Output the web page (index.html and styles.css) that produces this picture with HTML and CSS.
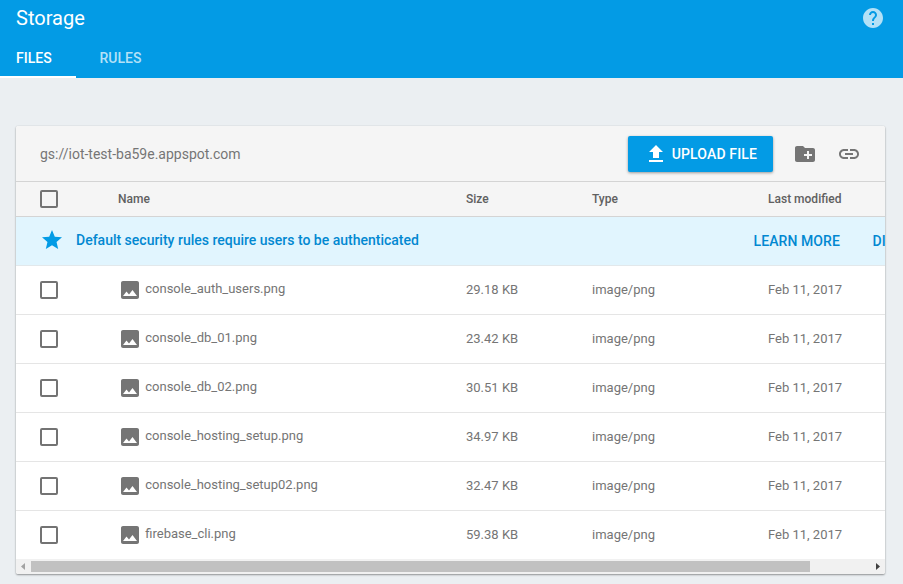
FILE: index.html
```html
<!DOCTYPE html>
<html lang="en">
<head>
<meta charset="utf-8">
<title>Storage</title>
<link rel="stylesheet" href="styles.css">
</head>
<body>
<svg width="0" height="0" class="defs">
  <symbol id="image" viewBox="0 0 24 24"><path d="M21 19V5c0-1.100-.9-2-2-2H5c-1.100 0-2 .9-2 2v14c0 1.100.9 2 2 2h14c1.100 0 2-.9 2-2zM8.500 13.500l2.500 3.010L14.500 12l4.500 6H5l3.500-4.500z"/></symbol>
</svg>
<header class="appbar">
  <div class="title-row">
    <h1>Storage</h1>
    <svg class="icon help" viewBox="0 0 24 24"><path d="M12 2C6.480 2 2 6.480 2 12s4.480 10 10 10 10-4.480 10-10S17.520 2 12 2zm1 17h-2v-2h2v2zm2.070-7.750l-.9.920C13.450 12.900 13 13.500 13 15h-2v-.5c0-1.100.45-2.100 1.170-2.830l1.240-1.260c.37-.36.59-.86.59-1.410 0-1.100-.9-2-2-2s-2 .9-2 2H8c0-2.210 1.790-4 4-4s4 1.790 4 4c0 .88-.36 1.680-.93 2.250z"/></svg>
  </div>
  <nav class="tabs">
    <a class="tab active">FILES</a>
    <a class="tab">RULES</a>
  </nav>
</header>
<main class="card">
  <div class="toolbar">
    <span class="bucket">gs://iot-test-ba59e.appspot.com</span>
    <button class="upload"><svg class="icon" viewBox="0 0 24 24"><path d="M9 16h6v-6h4l-7-7-7 7h4zm-4 2h14v2H5z"/></svg><span>UPLOAD FILE</span></button>
    <svg class="icon folder" viewBox="0 0 24 24"><path d="M20 6h-8l-2-2H4c-1.110 0-1.990.89-1.990 2L2 18c0 1.110.89 2 2 2h16c1.110 0 2-.89 2-2V8c0-1.110-.89-2-2-2zm-1 8h-3v3h-2v-3h-3v-2h3V9h2v3h3v2z"/></svg>
    <svg class="icon link" viewBox="0 0 24 24"><path d="M3.900 12c0-1.710 1.390-3.100 3.100-3.100h4V7H7c-2.760 0-5 2.240-5 5s2.240 5 5 5h4v-1.900H7c-1.710 0-3.100-1.390-3.100-3.100zM8 13h8v-2H8v2zm9-6h-4v1.900h4c1.710 0 3.100 1.390 3.100 3.100s-1.390 3.100-3.100 3.100h-4V17h4c2.760 0 5-2.240 5-5s-2.240-5-5-5z"/></svg>
  </div>
  <div class="row head"><span class="check"></span><span>Name</span><span>Size</span><span>Type</span><span>Last modified</span></div>
  <div class="banner">
    <svg class="icon" viewBox="0 0 24 24"><path d="M12 17.270L18.180 21l-1.640-7.030L22 9.240l-7.190-.61L12 2 9.190 8.630 2 9.240l5.460 4.730L5.820 21z"/></svg>
    <span class="message">Default security rules require users to be authenticated</span>
    <a class="action">LEARN MORE</a>
    <a class="action">DISMISS</a>
  </div>
  <div class="row"><span class="check"></span><span class="name"><svg class="icon"><use href="#image"/></svg><span>console_auth_users.png</span></span><span>29.18 KB</span><span>image/png</span><span>Feb 11, 2017</span></div>
  <div class="row"><span class="check"></span><span class="name"><svg class="icon"><use href="#image"/></svg><span>console_db_01.png</span></span><span>23.42 KB</span><span>image/png</span><span>Feb 11, 2017</span></div>
  <div class="row"><span class="check"></span><span class="name"><svg class="icon"><use href="#image"/></svg><span>console_db_02.png</span></span><span>30.51 KB</span><span>image/png</span><span>Feb 11, 2017</span></div>
  <div class="row"><span class="check"></span><span class="name"><svg class="icon"><use href="#image"/></svg><span>console_hosting_setup.png</span></span><span>34.97 KB</span><span>image/png</span><span>Feb 11, 2017</span></div>
  <div class="row"><span class="check"></span><span class="name"><svg class="icon"><use href="#image"/></svg><span>console_hosting_setup02.png</span></span><span>32.47 KB</span><span>image/png</span><span>Feb 11, 2017</span></div>
  <div class="row last"><span class="check"></span><span class="name"><svg class="icon"><use href="#image"/></svg><span>firebase_cli.png</span></span><span>59.38 KB</span><span>image/png</span><span>Feb 11, 2017</span></div>
  <div class="scrollbar">
    <svg class="arrow off" viewBox="0 0 15 15"><path d="M9 4v7L5 7.500z"/></svg>
    <div class="track"><div class="thumb"></div></div>
    <svg class="arrow" viewBox="0 0 15 15"><path d="M6 4v7l4-3.500z"/></svg>
  </div>
</main>
</body>
</html>
```
FILE: styles.css
```css
* { box-sizing: border-box; }
body {
  margin: 0;
  height: 584px;
  overflow: hidden;
  background: #ebeff2;
  color: #757575;
  font: 14px/20px Roboto, sans-serif;
}
.defs { display: block; }
.icon { width: 24px; height: 24px; fill: currentColor; flex: none; }
.appbar { height: 78px; background: #039be5; color: #fff; }
.title-row {
  display: flex;
  justify-content: space-between;
  align-items: center;
  height: 36px;
  padding: 0 18px 0 16px;
}
h1 { margin: 0; font-size: 20px; font-weight: 400; line-height: 24px; }
.help { color: #b3e1f7; }
.tabs { display: flex; height: 42px; }
.tab {
  width: 76px;
  padding: 12px 0 0 16px;
  font-weight: 500;
  color: #b3e1f7;
}
.tab + .tab { padding-left: 23.5px; }
.tab.active { color: #fff; border-bottom: 2px solid #fff; }
.card {
  width: 869px;
  height: 448px;
  margin: 48px 0 0 16px;
  overflow: hidden;
  background: #fff;
  border-radius: 2px;
  box-shadow: 0 1px 2px rgba(0, 0, 0, .38), 0 0 1px rgba(0, 0, 0, .22);
}
.toolbar {
  display: flex;
  align-items: center;
  height: 56px;
  padding: 0 24px;
  background: #f5f5f5;
  border-bottom: 1px solid #d4d4d4;
}
.bucket { flex: 1; }
.upload {
  display: flex;
  align-items: center;
  gap: 3.7px;
  width: 145px;
  height: 36px;
  margin-right: 20px;
  padding: 0 0 0 16px;
  border: 0;
  border-radius: 2px;
  background: #039be5;
  color: #fff;
  font: 500 14px/20px Roboto, sans-serif;
  letter-spacing: .14px;
  box-shadow: 0 1px 3px rgba(0, 0, 0, .38);
}
.folder { margin-right: 20px; }
.row {
  display: grid;
  grid-template-columns: 78px 348px 126px 176px 1fr;
  align-items: center;
  height: 49px;
  padding-left: 24px;
  border-bottom: 1px solid #e5e5e5;
  font-size: 13px;
}
.row.last { height: 48px; border-bottom: 0; }
.row.head {
  height: 35px;
  background: #f5f5f5;
  border-bottom-color: #d4d4d4;
  color: #606060;
  font-size: 12px;
  font-weight: 500;
}
.check { width: 18px; height: 18px; border: 2px solid #737373; border-radius: 2px; }
.name { display: flex; align-items: center; gap: 3.25px; }
.name span { padding-bottom: 2px; }
.banner {
  display: flex;
  align-items: center;
  height: 49px;
  padding-left: 24px;
  border-bottom: 1px solid #e2e8eb;
  background: #e1f5fe;
  color: #0288d1;
  font-weight: 500;
  white-space: nowrap;
}
.banner .icon { margin-bottom: 2px; color: #039be5; }
.message { flex: none; width: 689.5px; padding: 0 0 2px 12px; }
.action { flex: none; margin-right: 32.5px; letter-spacing: .09px; }
.scrollbar { display: flex; height: 15px; background: #f1f1f1; }
.arrow { width: 15px; height: 15px; fill: #404040; flex: none; }
.arrow.off { fill: #a3a3a3; }
.track { flex: 1; padding: 2px 0; }
.thumb { width: 779px; height: 11px; background: #c1c1c1; }
```
